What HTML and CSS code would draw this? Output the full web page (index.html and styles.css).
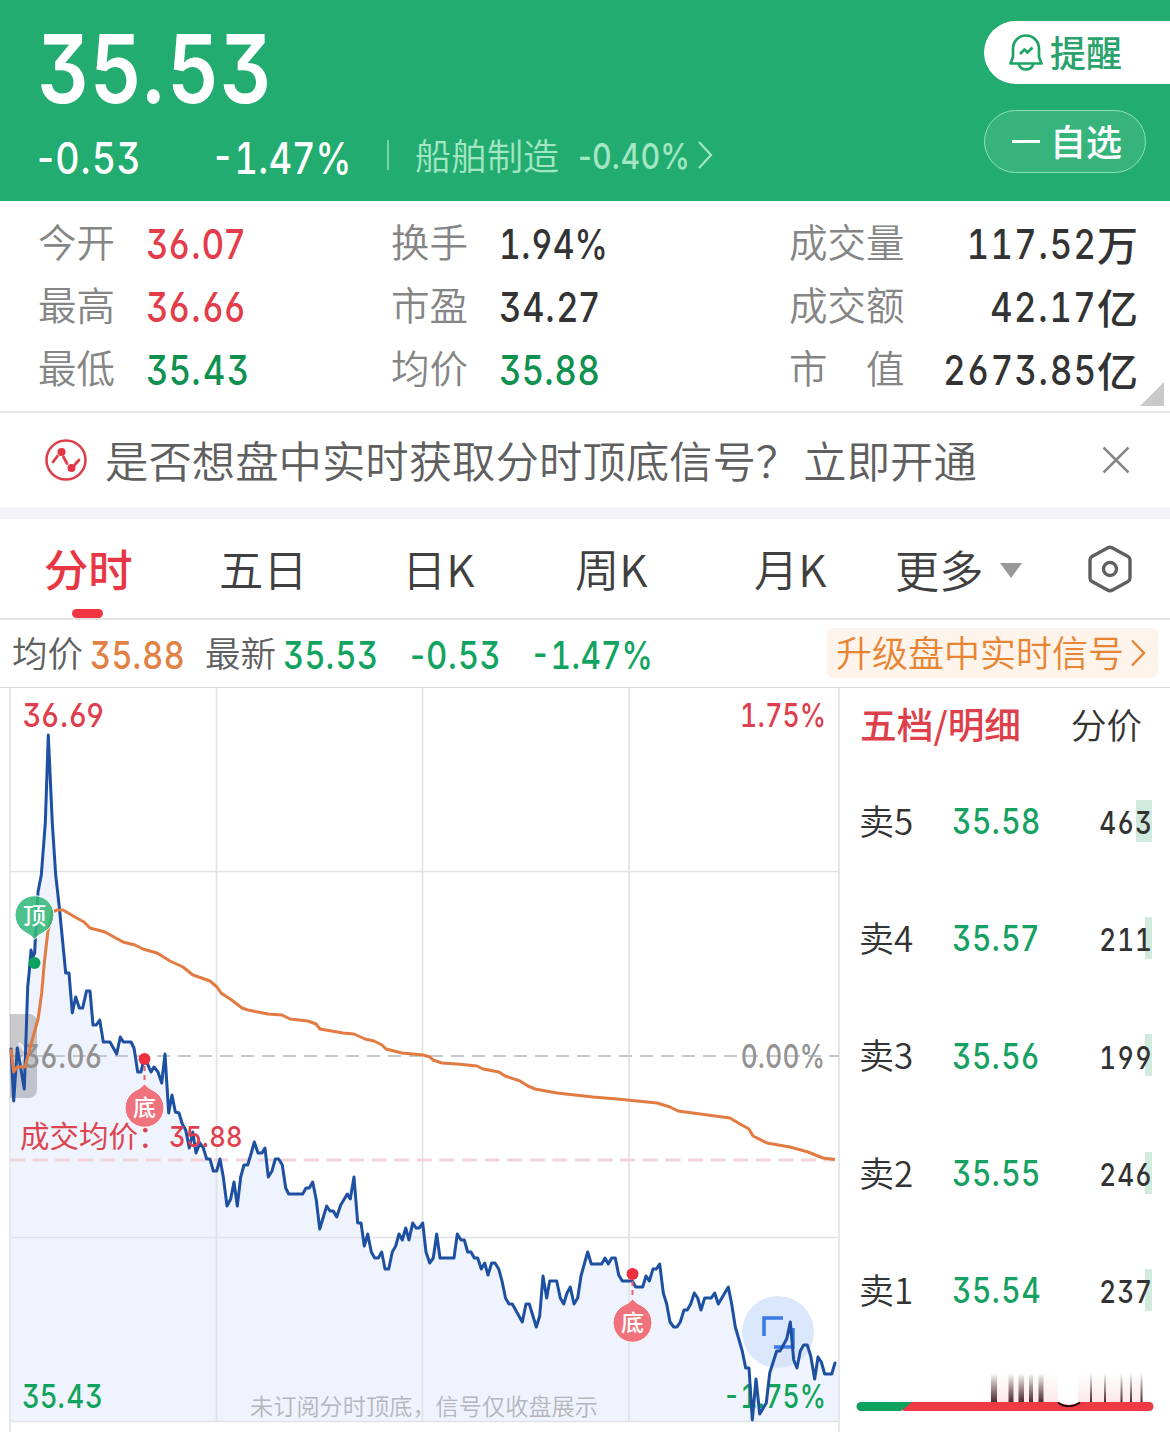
FILE: index.html
```html
<!DOCTYPE html>
<html lang="zh-CN">
<head>
<meta charset="utf-8">
<title>分时行情</title>
<link rel="stylesheet" href="styles.css">
</head>
<body>
<header class="quote">
  <div class="quote-main">
    <div class="last"><span class="num">35.53</span></div>
    <div class="change-row">
      <span class="chg"><span class="num">-0.53</span></span>
      <span class="pct"><span class="num tn pc">-1<i>.</i>47%</span></span>
      <span class="divider"></span>
      <span class="sector">船舶制造</span>
      <span class="sector-pct"><span class="num">-0.40%</span></span>
      <svg class="chev" width="16" height="30" viewBox="0 0 16 30"><path d="M2 2L14 15L2 28" fill="none" stroke="#a3e6c3" stroke-width="2.2"/></svg>
    </div>
  </div>
  <div class="actions">
    <div class="remind">
      <svg width="36" height="38" viewBox="0 0 36 38" fill="none" stroke="#1ea566" stroke-width="2.700" stroke-linejoin="round"><path d="M5 23V15C5 7 11 1.500 18 1.500S31 7 31 15V23L33.500 29.500H2.500Z"/><path d="M10.500 30C12 34 15 35.500 18 35.500S24 34 25.500 30"/><path d="M12 20L16.500 15.500L19.500 18.500L24.500 13.500"/></svg>
      <span>提醒</span>
    </div>
    <div class="watch"><i class="minus"></i><span>自选</span></div>
  </div>
</header>

<section class="stats">
  <div class="col col-a">
    <div><label>今开</label><b class="num red">36.07</b></div>
    <div><label>最高</label><b class="num red">36.66</b></div>
    <div><label>最低</label><b class="num green">35.43</b></div>
  </div>
  <div class="col col-b">
    <div><label>换手</label><b class="num tn pc">1<i>.</i>94%</b></div>
    <div><label>市盈</label><b class="num">34.27</b></div>
    <div><label>均价</label><b class="num green">35.88</b></div>
  </div>
  <div class="col col-c">
    <div><label>成交量</label><span class="val"><b class="num tn">117<i>.</i>52</b><em>万</em></span></div>
    <div><label>成交额</label><span class="val"><b class="num tn">42<i>.</i>17</b><em>亿</em></span></div>
    <div><label>市　值</label><span class="val"><b class="num tn">2673<i>.</i>85</b><em>亿</em></span></div>
  </div>
  <i class="corner"></i>
</section>

<section class="notice">
  <svg width="42" height="42" viewBox="0 0 42 42"><circle cx="21" cy="21" r="19.500" fill="none" stroke="#dc3d48" stroke-width="2.500"/><path d="M8 23L12.500 17M18.500 18L22 24.500M30 25.500L34 21" stroke="#dc3d48" stroke-width="2.800" stroke-linecap="round"/><circle cx="16.500" cy="13" r="4" fill="#e53442"/><circle cx="26.500" cy="29" r="4" fill="#e53442"/></svg>
  <p>是否想盘中实时获取分时顶底信号？<span>立即开通</span></p>
  <svg class="close" width="28" height="28" viewBox="0 0 28 28"><path d="M1.500 1.500L26.500 26.500M26.500 1.500L1.500 26.500" stroke="#888" stroke-width="2.500"/></svg>
</section>

<nav class="tabs">
  <a class="active">分时</a><a>五日</a><a>日K</a><a>周K</a><a>月K</a><a class="more">更多<i></i></a>
  <svg width="44" height="48" viewBox="0 0 44 48" fill="none" stroke="#606060" stroke-width="3.400" stroke-linejoin="round"><path d="M19.500 3Q22 1.600 24.500 3L40 11.500Q42 12.700 42 15V33Q42 35.300 40 36.500L24.500 45Q22 46.400 19.500 45L4 36.500Q2 35.300 2 33V15Q2 12.700 4 11.500Z"/><circle cx="22" cy="24" r="6.500"/></svg>
</nav>

<section class="info">
  <span class="lab">均价</span><span class="n1"><b class="num orange">35.88</b></span>
  <span class="lab">最新</span><span class="n2"><b class="num green2">35.53</b></span>
  <span class="n3"><b class="num green2">-0.53</b></span>
  <span class="n4"><b class="num tn pc green2">-1<i>.</i>47%</b></span>
  <span class="upgrade"><span>升级盘中实时信号</span><svg width="16" height="28" viewBox="0 0 16 28"><path d="M2 1.500L14 14L2 26.500" fill="none" stroke="#e88432" stroke-width="2.400"/></svg></span>
</section>

<main class="board">
<svg class="chart" width="840" height="744" viewBox="0 688 840 744">
  <defs>
    <path id="price" d="M11 1049L13.700 1101L17.300 1048L24.300 1089L27.700 987L29.700 967L31 950L32.700 957L34.700 953L36 923L38 892L41.300 875L45.300 823L48.300 735L52.300 823L55.700 875L59.300 907L62.300 938L65.700 973H69L72.300 1013L75.700 997L79.300 1008H82.700L86.500 991H90L93 1025H96.300L99.700 1020L103.300 1042H110L116.700 1054L120.300 1037L123.300 1042H131L134 1048L137.700 1072H141L144 1059L148 1065L151 1072L154 1067L158 1072L161.700 1083L165 1054L168.700 1113L172 1095L175.300 1112L179 1113L182.300 1124L185.700 1130L189.300 1148L192.700 1132L196 1153L200 1143L203.300 1148L206.700 1159H210L213.300 1171H216.700L220 1159L223.300 1177L227 1206L230.700 1199L234 1182L237.300 1206L240.700 1177L244 1165H247.700L251.300 1153L254.300 1142L258 1153H262L265 1148L268.300 1177L272 1171L275.300 1159H278.700L282.300 1165L285.700 1188L288.700 1194H302.700L306 1188H309.300L312.700 1182L316.300 1200L319.700 1229L326.700 1206L330 1211H333.300L336.700 1217L340.700 1205L347.300 1194L350.300 1199L354 1177L357.700 1223H361L364.300 1246L367.700 1234L371.300 1252L374.700 1258H378.300L381.700 1252L385 1269H388.700L392.300 1252L395.700 1246L399 1234L402.300 1240L405.700 1228L409 1240L412.700 1223L416 1228H419.300L422.700 1223L426 1252L429.700 1263L433.300 1258L436.700 1234L440 1258H454L457.300 1234L461 1240H464.300L467.700 1252H471L474.300 1258H477.700L481.300 1269L484.700 1263L488 1275L491.700 1263H495L498.700 1269L502 1281L505.500 1298L509 1304H512.300L522.300 1322L526 1304H529.300L536.300 1327L539.700 1316L543 1276L546.700 1298L549.700 1281H556.700L560.300 1298L563.700 1304L567 1293L570.300 1287L574 1304L577.700 1298L581 1276L584.300 1264L587.700 1252L591.300 1264H601.700L605 1258L608.300 1264L611.700 1258H615.300L618.700 1275L622.300 1281H632.300L635.700 1287H642.700L646 1276L649.300 1281L653 1269H656.300L659.700 1264L663.300 1293L666.700 1304L670 1322L673.700 1327H677L680.300 1322L684 1310H687.300L690.700 1304L694.300 1293L697.700 1298L701 1310L704.700 1298H711.300L714.700 1293L718.300 1304L728.300 1287L731.700 1304L735.300 1327L742 1350L745.700 1368H749L752.300 1420L756 1379L759.700 1414L766.300 1403L769.700 1373L776.700 1351H780L786.700 1339L790.300 1322L793.700 1360L797 1368L800.300 1351L803.700 1345H807.300L810.700 1356L814.700 1379L818 1357L821.300 1362L824.700 1374H831.700L835 1363"/>
  </defs>
  <path class="area" d="M11 1421V1049L13.700 1101L17.300 1048L24.300 1089L27.700 987L31 950L34.700 953L38 892L41.300 875L48.300 735L55.700 875L65.700 973H69L72.300 1013L79.300 1008L86.500 991H90L93 1025L103.300 1042L116.700 1054L131 1042L137.700 1072L144 1059L161.700 1083L165 1054L168.700 1113L179 1113L189.300 1148L206.700 1159L213.300 1171L220 1159L227 1206L234 1182L237.300 1206L244 1165L254.300 1142L265 1148L268.300 1177L278.700 1159L288.700 1194H302.700L312.700 1182L319.700 1229L326.700 1206L336.700 1217L347.300 1194L354 1177L357.700 1223L364.300 1246L374.700 1258L388.700 1270L399 1234L412.700 1223H422.700L429.700 1263L436.700 1234L440 1258H454L457.300 1234L477.700 1258L488 1275L495 1263L505.500 1298L522.300 1322L529.300 1304L536.300 1327L543 1276L546.700 1298L556.700 1281L563.700 1304L570.300 1287L574 1304L587.700 1252L591.300 1264L615.300 1258L622.300 1281L642.700 1287L659.700 1264L666.700 1304L673.700 1327L694.300 1293L701 1310L714.700 1293L718.300 1304L728.300 1287L735.300 1327L749 1368L752.300 1420L756 1379L759.700 1414L766.300 1403L769.700 1373L790.300 1322L797 1368L807.300 1345L814.700 1379L818 1357L824.700 1374H831.700L835 1363H838V1421Z"/>
  <path class="grid" d="M10 688V1432M216.500 688V1421M422.500 688V1421M629 688V1421M839 688V1432M10 871.500H839M10 1237.500H839M10 1421.500H839"/>
  <path class="mid" d="M10 1056H839"/>
  <path class="avgline" d="M10 1160H835"/>
  <path class="handle" d="M10 1014H29A8 8 0 0 1 37 1022V1090A8 8 0 0 1 29 1098H10Z"/>
  <path d="M19 1043L27 1053L19 1063" class="handle-arrow"/>
  <g class="axis">
    <text x="22.500" y="727" class="r" textLength="82" lengthAdjust="spacingAndGlyphs">36.69</text>
    <text x="740" y="727" class="r tn" textLength="86" lengthAdjust="spacingAndGlyphs">1<tspan>.</tspan>75%</text>
    <text x="22.500" y="1068" class="g" textLength="80" lengthAdjust="spacingAndGlyphs">36.06</text>
    <text x="741" y="1068" class="g" textLength="85" lengthAdjust="spacingAndGlyphs">0.00%</text>
    <text x="22" y="1408" class="gr" textLength="81" lengthAdjust="spacingAndGlyphs">35.43</text>
    <text x="723" y="1408" class="gr tn" textLength="103" lengthAdjust="spacingAndGlyphs">-1<tspan>.</tspan>75%</text>
  </g>
  <text x="250" y="1415" class="hint" textLength="348">未订阅分时顶底，信号仅收盘展示</text>
  <circle cx="778" cy="1332" r="36" class="zoom-bg"/>
  <path class="zoom-icon" d="M764 1336V1318H783M774 1347H793V1328"/>
  <use href="#price" class="price"/>
  <path class="avg" d="M11 1049L13.700 1072L17 1067H25L31.700 1042L38.300 1018L41.700 993L44.300 963L47.700 933L52 912L57 910H63L76.700 918L84 922L90 928L105 932L123 942L135 945L143 949L157 953L170 961L183 967L193 975L210 981L217 987L221 993L233 1001L242 1008L248 1010L268 1014L282 1015L290 1019L308 1021L316 1024L320 1029L343 1033L354 1034L365 1039L374 1041L382 1045L386 1049L402 1053L423 1055L430 1057L433 1060L442 1063L457 1064L477 1066L483 1069L499 1072L505 1076L520 1081L528 1086L535 1089L557 1093L593 1097L617 1099L657 1103L670 1107L678 1111L730 1118L740 1124L749 1129L753 1136L767 1143L790 1147L808 1152L823 1158L835 1159.500"/>
  <text x="20" y="1147" class="avg-label">成交均价：</text>
  <g class="axis"><text x="169" y="1147" class="r lo" textLength="74" lengthAdjust="spacingAndGlyphs">35.88</text></g>
  <path class="pin top" d="M34.500 939Q30 934.500 25.500 932.500A19.500 19.500 0 1 1 43.500 932.500Q39 934.500 34.500 939Z"/>
  <text x="34.500" y="924" class="pin-text">顶</text>
  <circle cx="34.500" cy="963" r="6" fill="#0ba35c"/>
  <path class="stem" d="M144.500 1066V1082M632.500 1281V1297"/>
  <path class="pin" d="M144.500 1084Q149 1089 153.500 1090.500A19.500 19.500 0 1 1 135.500 1090.500Q140 1089 144.500 1084Z"/>
  <text x="144.500" y="1116" class="pin-text">底</text>
  <circle cx="144.500" cy="1059" r="6" fill="#ec303f"/>
  <path class="pin" d="M632.500 1299Q637 1304 641.500 1305.500A19.500 19.500 0 1 1 623.500 1305.500Q628 1304 632.500 1299Z"/>
  <text x="632.500" y="1331" class="pin-text">底</text>
  <circle cx="632.500" cy="1274" r="6" fill="#ec303f"/>
</svg>
<aside class="depth">
  <div class="depth-tabs"><b>五档/明细</b><span>分价</span></div>
  <div class="row"><span class="side">卖5</span><span class="price-n"><b class="num">35.58</b></span><span class="vol wide"><b class="num tn">463</b></span></div>
  <div class="row"><span class="side">卖4</span><span class="price-n"><b class="num">35.57</b></span><span class="vol"><b class="num tn">211</b></span></div>
  <div class="row"><span class="side">卖3</span><span class="price-n"><b class="num">35.56</b></span><span class="vol"><b class="num tn">199</b></span></div>
  <div class="row"><span class="side">卖2</span><span class="price-n"><b class="num">35.55</b></span><span class="vol"><b class="num tn">246</b></span></div>
  <div class="row"><span class="side">卖1</span><span class="price-n"><b class="num">35.54</b></span><span class="vol"><b class="num tn">237</b></span></div>
  <svg class="ratio" width="330" height="60" viewBox="840 1372 330 60">
    <defs><linearGradient id="fade" x1="0" y1="0" x2="0" y2="1"><stop offset="0" stop-color="#2c0b10" stop-opacity="0"/><stop offset="1" stop-color="#2c0b10" stop-opacity=".85"/></linearGradient>
    <linearGradient id="blush" x1="0" y1="0" x2="0" y2="1"><stop offset="0" stop-color="#f6b4b4" stop-opacity="0"/><stop offset="1" stop-color="#f6b4b4" stop-opacity=".3"/></linearGradient></defs>
    <path fill="url(#blush)" d="M990 1374H1058V1403H990ZM1078 1374H1143V1403H1078Z"/>
    <path fill="url(#fade)" d="M991 1374h6v29h-6zM1008.500 1374h5v29h-5zM1018.500 1374h5.500v29h-5.500zM1029 1374h4v29h-4zM1038.500 1374h5v29h-5zM1090 1374h2v29h-2zM1104 1374h2v29h-2zM1120.500 1374h2v29h-2zM1130 1374h2v29h-2zM1140.500 1374h2v29h-2z"/>
    <path d="M905 1407.500H1149" stroke="#ed3a45" stroke-width="9" stroke-linecap="round"/>
    <path d="M861 1403H912L901 1412H861A4.500 4.500 0 0 1 861 1403Z" fill="#0ca25d"/>
    <path d="M1058 1403Q1068 1409 1080 1403Z" fill="#fff"/><path d="M1058 1403.500Q1068 1411 1080 1403.500" fill="none" stroke="#180408" stroke-width="1.700"/>
  </svg>
</aside>
</main>
</body>
</html>
```
FILE: styles.css
```css
* { box-sizing: border-box; }
body {
  margin: 0; width: 1170px; height: 1432px; overflow: hidden; background: #fff; color: #333;
  font-family: "Noto Sans CJK SC", sans-serif; font-weight: 350;
}
i, em { font-style: normal; }
svg { display: block; flex: none; }
.num {
  display: inline-block; white-space: nowrap; font-family: Inter, Roboto, sans-serif; font-weight: 550;
  font-feature-settings: "cv09", "cv03", "cv04"; letter-spacing: .04em; transform: scaleX(.84); transform-origin: 0 50%;
}
.num.tn, .axis text.tn { font-feature-settings: "cv09", "cv03", "cv04", "tnum"; }
.num.pc { letter-spacing: 0; transform: scaleX(.82); }
.tn i, .axis .tn tspan { font-feature-settings: "cv09"; }
.red { color: #e23d49; }
.green { color: #0f9150; }
.green2 { color: #11a360; }
.orange { color: #e08145; }

.quote { height: 201px; background: #22ac6f; color: #fff; display: flex; justify-content: space-between; }
.quote-main { padding-left: 37px; }
.last { height: 120px; padding-top: 4px; font-size: 95px; line-height: 116px; }
.last .num { font-weight: 600; letter-spacing: .02em; transform: scaleX(.85); }
.change-row { display: flex; align-items: center; height: 70px; font-size: 44px; }
.chg { width: 174px; }
.pct { width: 176px; }
.divider { width: 2px; height: 30px; background: #7dd0a8; }
.sector { width: 163px; margin-left: 26px; font-size: 36px; color: #a3e6c3; margin-top: -2px; }
.sector-pct { width: 119px; font-size: 35.500px; color: #a3e6c3; margin-top: -4px; }
.sector-pct .num { font-weight: 450; letter-spacing: .015em; }
.actions { width: 186px; padding-top: 21px; }
.remind, .watch { height: 63px; display: flex; align-items: center; font-size: 36px; font-weight: 500; }
.remind { background: #fff; color: #2aa26b; border-radius: 32px 0 0 32px; padding-left: 24px; gap: 6px; }
.remind span, .watch span { margin-top: -4px; }
.watch { width: 162px; margin-top: 26px; border: 1.500px solid #8fe0b6; border-radius: 32px; background: #37b47c; padding-left: 27px; gap: 10px; }
.minus { width: 28px; height: 3px; background: #fff; }

.stats { position: relative; height: 212px; border-bottom: 2px solid #eaeaea; padding: 10px 32px 0 38px; display: flex; }
.col > div { display: flex; align-items: center; height: 63px; }
.col label { font-size: 38.500px; color: #858585; margin-top: -6px; white-space: nowrap; }
.col .num { font-size: 41px; padding-top: 2px; }
.col-a { width: 353px; }
.col-a label, .col-b label { width: 108px; }
.col-b { width: 398px; }
.col-c { flex: 1; }
.col-c > div { justify-content: space-between; }
.col-c label { width: 116px; flex: none; }
.val { display: flex; align-items: center; justify-content: flex-end; min-width: 0; }
.col-c .num { transform-origin: 100% 50%; }
.val em { font-size: 41px; font-weight: 500; line-height: 60px; margin-top: 1px; }
.corner { position: absolute; right: 6px; bottom: 5px; border: 12px solid #c9c9c9; border-top-color: transparent; border-left-color: transparent; }

.notice { height: 106px; border-bottom: 12px solid #f2f2f8; display: flex; align-items: center; padding: 0 40px 0 45px; }
.notice p { flex: 1; margin: -3px 0 0 18px; font-size: 43.400px; color: #5f5f5f; white-space: nowrap; }
.notice p span { margin-left: 4px; }
.tabs { height: 101px; border-bottom: 2px solid #e4e4e4; display: flex; align-items: center; padding-left: 44px; font-size: 44.300px; color: #404040; }
.tabs a { position: relative; line-height: 98px; height: 99px; width: 175px; }
.tabs a:nth-child(2) { width: 183px; }
.tabs a:nth-child(3) { width: 173px; }
.tabs a:nth-child(4) { width: 179px; }
.tabs a:nth-child(5) { width: 141px; }
.tabs .more { width: 193px; height: 97px; display: flex; align-items: center; gap: 16px; }
.more i { border: 11px solid transparent; border-top: 15px solid #999; border-bottom: 0; margin-top: 3px; }
.tabs .active { color: #e83744; font-weight: 500; }
.active::after { content: ""; position: absolute; left: 28px; bottom: 0; width: 31px; height: 9px; border-radius: 5px; background: #f23340; }

.info { height: 68px; display: flex; align-items: center; padding: 0 12px; font-size: 38.500px; border-bottom: 1px solid #d9d9d9; }
.lab { font-size: 35.500px; color: #606060; width: 78px; margin-top: -4px; }
.n1, .n2, .n3, .n4 { margin-top: -3px; }
.n1 { width: 115px; }
.n2 { width: 127px; }
.n3 { width: 120px; }
.n4 { flex: 1; }
.upgrade { width: 331px; height: 50px; background: #fef4eb; border-radius: 6px; color: #e88432; font-size: 36px; display: flex; align-items: center; padding-left: 9px; gap: 6px; white-space: nowrap; margin-top: -2px; }
.upgrade span { margin-top: -3px; }

.board { display: flex; height: 744px; }
.grid { fill: none; stroke: #e0e2e6; stroke-width: 1.600; }
.area { fill: #eff3fd; }
.mid { stroke: #c4cacb; stroke-width: 2; stroke-dasharray: 13 8; }
.avgline { stroke: #f3d3da; stroke-width: 3; stroke-dasharray: 15 7.600; }
.price { fill: none; stroke: #1e50a2; stroke-width: 3; stroke-linejoin: round; stroke-linecap: round; }
.avg { fill: none; stroke: #e27b42; stroke-width: 3; stroke-linejoin: round; }
.handle { fill: #8a8a90; fill-opacity: .45; }
.handle-arrow { fill: none; stroke: #eee; stroke-width: 3; }
.axis text { font: 530 33px Inter, Roboto, sans-serif; font-feature-settings: "cv09", "cv03", "cv04"; letter-spacing: .03em; }
.axis text.tn { letter-spacing: 0; }
.axis text.lo { font-size: 29px; font-weight: 450; }
.r { fill: #de3f4e; }
.g { fill: #929292; }
.gr { fill: #11a35c; }
.hint { font-size: 23.200px; fill: #b4b6bb; }
.avg-label { font-size: 29.500px; fill: #dc4450; font-weight: 400; }
.zoom-bg { fill: #cfdff9; fill-opacity: .75; }
.zoom-icon { fill: none; stroke: #3b7ae6; stroke-width: 3.500; }
.pin { fill: #f0727c; stroke: #fff; stroke-width: 1; }
.pin.top { fill: #34b87b; fill-opacity: .88; }
.pin-text { fill: #fff; font-size: 23px; font-weight: 500; text-anchor: middle; }
.stem { stroke: #e8616d; stroke-width: 2; stroke-dasharray: 5 4; }

.depth { width: 330px; }
.depth-tabs { height: 70px; margin-bottom: 4px; padding: 0 28px 0 20px; display: flex; align-items: center; justify-content: space-between; font-size: 35.500px; }
.depth-tabs b { font-weight: 500; font-size: 36.700px; color: #de404b; }
.row { height: 117.300px; padding: 0 18px 0 19px; display: flex; align-items: center; }
.side { width: 93px; font-size: 35px; margin-top: -3px; }
.price-n { flex: 1; font-size: 35px; color: #16a162; margin-top: -4px; }
.price-n .num { letter-spacing: .05em; transform: scaleX(.85); }
.vol { font-size: 31px; height: 42px; display: flex; align-items: center; justify-content: flex-end; width: 70px; background: linear-gradient(#d0eadd, #d0eadd) right / 7px 100% no-repeat; }
.vol.wide { background-size: 16px 100%; }
.vol .num { transform-origin: 100% 50%; padding-top: 4px; letter-spacing: .04em; margin-right: -1px; }
.ratio { margin-top: 23px; }
```
